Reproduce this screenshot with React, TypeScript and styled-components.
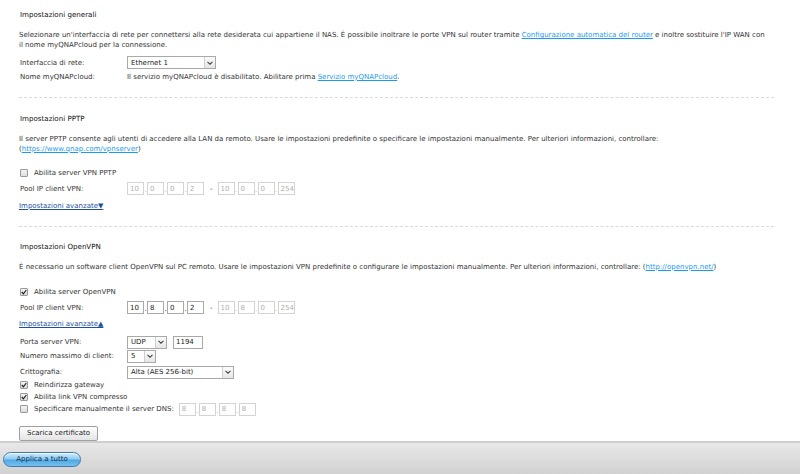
import React from "react";
import styled, { createGlobalStyle } from "styled-components";

const FONT = `"DejaVu Sans", Verdana, sans-serif`;

const Global = createGlobalStyle`
  html, body { margin: 0; padding: 0; background: #fff; }
  body { font-family: ${FONT}; font-size: 7px; color: #333; }
  * { box-sizing: border-box; }
`;

const Page = styled.div`
  width: 800px;
  height: 474px;
  display: flex;
  flex-direction: column;
  overflow: hidden;
`;

const Content = styled.div`
  flex: 1;
  padding: 10px 27px 0 19px;
  display: flex;
  flex-direction: column;
  overflow: hidden;
`;

const Title = styled.div<{ $mt?: number }>`
  color: #111;
  font-size: 7.1px;
  line-height: 10px;
  padding-left: 1px;
  margin-top: ${(p) => p.$mt ?? 0}px;
`;

const Para = styled.p<{ $mt?: number }>`
  margin: ${(p) => p.$mt ?? 10}px 0 0 0;
  line-height: 10px;
  white-space: nowrap;
`;

const Link = styled.a`
  color: #1a9af0;
  text-decoration: underline;
`;

const AdvLink = styled.a<{ $mt?: number }>`
  color: #1d4f9e;
  text-decoration: underline;
  line-height: 10px;
  margin-top: ${(p) => p.$mt ?? 6}px;
  align-self: flex-start;
`;

const Divider = styled.div<{ $mt: number }>`
  margin-top: ${(p) => p.$mt}px;
  border-top: 1px dashed #dadada;
  width: 755px;
`;

const Row = styled.div<{ $mt?: number; $h?: number }>`
  display: flex;
  align-items: center;
  height: ${(p) => p.$h ?? 14}px;
  margin-top: ${(p) => p.$mt ?? 0}px;
`;

const Label = styled.span`
  width: 108px;
  flex: none;
  padding-left: 1px;
`;

const SelectBox = styled.div<{ $w: number }>`
  width: ${(p) => p.$w}px;
  height: 13px;
  border: 1px solid #a9a9a9;
  background: #fff;
  display: flex;
  align-items: stretch;
  color: #222;
`;

const SelectText = styled.span`
  flex: 1;
  padding-left: 3px;
  display: flex;
  align-items: center;
`;

const SelectArrow = styled.span`
  width: 11px;
  border-left: 1px solid #cfcfcf;
  background: linear-gradient(#fbfbfb, #e6e6e6);
  display: flex;
  align-items: center;
  justify-content: center;
`;

const TextInput = styled.div<{ $w: number; $disabled?: boolean }>`
  width: ${(p) => p.$w}px;
  height: 13px;
  border: 1px solid ${(p) => (p.$disabled ? "#d4d4d4" : "#a9a9a9")};
  color: ${(p) => (p.$disabled ? "#b0b0b0" : "#222")};
  padding-left: 2px;
  display: flex;
  align-items: center;
  background: #fff;
`;

const IpWrap = styled.div`
  display: flex;
  align-items: center;
`;

const IpDot = styled.span<{ $disabled?: boolean }>`
  width: 3px;
  text-align: center;
  color: ${(p) => (p.$disabled ? "#b0b0b0" : "#222")};
  align-self: flex-end;
  line-height: 10px;
`;

const Dash = styled.span`
  margin: 0 5px 0 6px;
  color: #333;
`;

const CheckBox = styled.span`
  width: 8px;
  height: 8px;
  border: 1px solid #9a9a9a;
  border-radius: 1px;
  background: linear-gradient(#f4f4f4, #dcdcdc);
  display: inline-flex;
  align-items: center;
  justify-content: center;
  margin-left: 1px;
  margin-right: 6px;
  flex: none;
`;

const Spacer = styled.span<{ $w: number }>`
  width: ${(p) => p.$w}px;
  flex: none;
`;

const Button = styled.div`
  margin-top: 11px;
  width: 79px;
  height: 15px;
  border: 1px solid #a0a0a0;
  border-radius: 2px;
  background: linear-gradient(#ffffff, #e4e4e4);
  display: flex;
  align-items: center;
  justify-content: center;
  color: #222;
`;

const Footer = styled.div`
  height: 33px;
  flex: none;
  border-top: 2px solid #cfcfcf;
  background: linear-gradient(#e8e8e8, #d1d1d1);
  display: flex;
  align-items: center;
  padding-left: 3px;
`;

const ApplyButton = styled.div`
  width: 78px;
  height: 15px;
  border-radius: 8px;
  border: 1px solid #3f79b0;
  background: linear-gradient(#d3ecfb 0%, #8fccf2 45%, #4fa9e3 55%, #79c0ee 100%);
  box-shadow: inset 0 1px 0 rgba(255, 255, 255, 0.7);
  color: #10324f;
  display: flex;
  align-items: center;
  justify-content: center;
  margin-top: 1px;
`;

const Arrow = () => (
  <svg width="6" height="4" viewBox="0 0 6 4">
    <path d="M0.5 0.8 L3 3.2 L5.5 0.8" fill="none" stroke="#444" strokeWidth="1.1" />
  </svg>
);

const Check = () => (
  <svg width="6" height="6" viewBox="0 0 6 6">
    <path d="M0.8 3 L2.4 4.8 L5.3 1" fill="none" stroke="#222" strokeWidth="1.2" />
  </svg>
);

const Select = ({ w, value }: { w: number; value: string }) => (
  <SelectBox $w={w}>
    <SelectText>{value}</SelectText>
    <SelectArrow>
      <Arrow />
    </SelectArrow>
  </SelectBox>
);

const Ip = ({ values, disabled }: { values: string[]; disabled?: boolean }) => (
  <IpWrap>
    {values.map((v, i) => (
      <React.Fragment key={i}>
        {i > 0 && <IpDot $disabled={disabled}>.</IpDot>}
        <TextInput $w={17} $disabled={disabled}>{v}</TextInput>
      </React.Fragment>
    ))}
  </IpWrap>
);

const CheckRow = ({ checked, children, mt }: { checked?: boolean; children: React.ReactNode; mt?: number }) => (
  <Row $mt={mt} $h={12}>
    <CheckBox>{checked && <Check />}</CheckBox>
    {children}
  </Row>
);

export default function App() {
  return (
    <Page>
      <Global />
      <Content>
        <Title>Impostazioni generali</Title>
        <Para>
          Selezionare un'interfaccia di rete per connettersi alla rete desiderata cui appartiene il NAS. È possibile inoltrare le porte VPN sul router tramite{" "}
          <Link>Configurazione automatica del router</Link> e inoltre sostituire l'IP WAN con
          <br />
          il nome myQNAPcloud per la connessione.
        </Para>
        <Row $mt={6}>
          <Label>Interfaccia di rete:</Label>
          <Select w={89} value="Ethernet 1" />
        </Row>
        <Row>
          <Label>Nome myQNAPcloud:</Label>
          <span>
            Il servizio myQNAPcloud è disabilitato. Abilitare prima <Link>Servizio myQNAPcloud</Link>.
          </span>
        </Row>
        <Divider $mt={13} />

        <Title $mt={16}>Impostazioni PPTP</Title>
        <Para>
          Il server PPTP consente agli utenti di accedere alla LAN da remoto. Usare le impostazioni predefinite o specificare le impostazioni manualmente. Per ulteriori informazioni, controllare:
          <br />(<Link>https://www.qnap.com/vpnserver</Link>)
        </Para>
        <CheckRow mt={13}>Abilita server VPN PPTP</CheckRow>
        <Row $mt={3}>
          <Label>Pool IP client VPN:</Label>
          <Ip values={["10", "0", "0", "2"]} disabled />
          <Dash>-</Dash>
          <Ip values={["10", "0", "0", "254"]} disabled />
        </Row>
        <AdvLink $mt={5}>Impostazioni avanzate▼</AdvLink>
        <Divider $mt={15} />

        <Title $mt={15}>Impostazioni OpenVPN</Title>
        <Para>
          È necessario un software client OpenVPN sul PC remoto. Usare le impostazioni VPN predefinite o configurare le impostazioni manualmente. Per ulteriori informazioni, controllare: (<Link>http://openvpn.net/</Link>)
        </Para>
        <CheckRow checked mt={14}>Abilita server OpenVPN</CheckRow>
        <Row $mt={3}>
          <Label>Pool IP client VPN:</Label>
          <Ip values={["10", "8", "0", "2"]} />
          <Dash>-</Dash>
          <Ip values={["10", "8", "0", "254"]} disabled />
        </Row>
        <AdvLink $mt={5}>Impostazioni avanzate▲</AdvLink>
        <Row $mt={6}>
          <Label>Porta server VPN:</Label>
          <Select w={40} value="UDP" />
          <Spacer $w={6} />
          <TextInput $w={30}>1194</TextInput>
        </Row>
        <Row>
          <Label>Numero massimo di client:</Label>
          <Select w={29} value="5" />
        </Row>
        <Row $mt={2}>
          <Label>Crittografia:</Label>
          <Select w={107} value="Alta (AES 256-bit)" />
        </Row>
        <CheckRow checked>Reindirizza gateway</CheckRow>
        <CheckRow checked>Abilita link VPN compresso</CheckRow>
        <CheckRow>
          Specificare manualmente il server DNS:
          <Spacer $w={5} />
          <Ip values={["8", "8", "8", "8"]} disabled />
        </CheckRow>
        <Button>Scarica certificato</Button>
      </Content>
      <Footer>
        <ApplyButton>Applica a tutto</ApplyButton>
      </Footer>
    </Page>
  );
}
